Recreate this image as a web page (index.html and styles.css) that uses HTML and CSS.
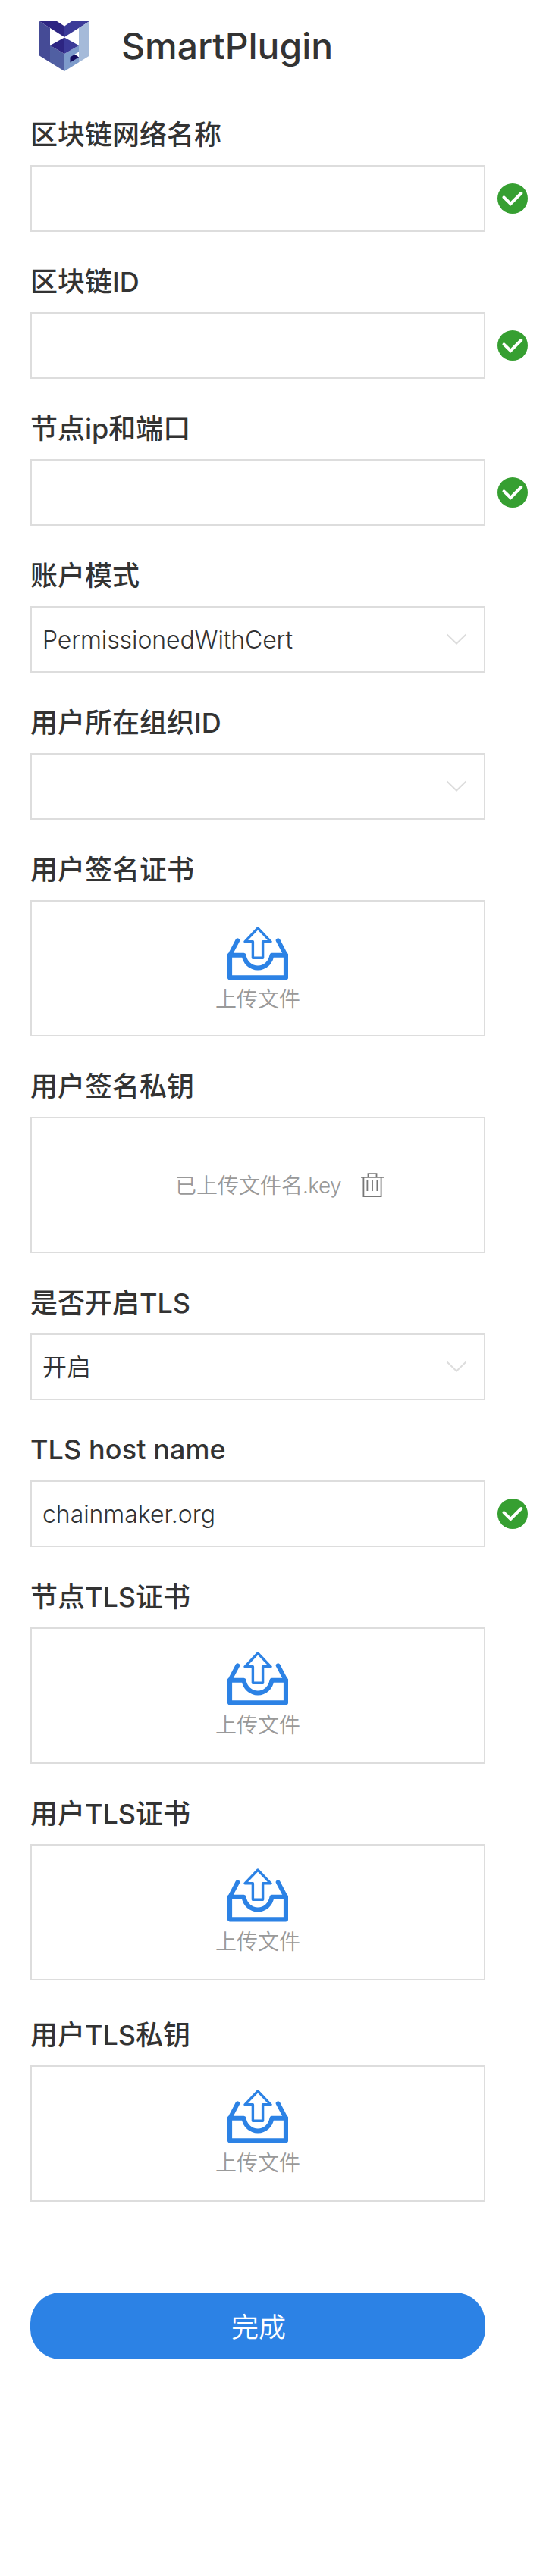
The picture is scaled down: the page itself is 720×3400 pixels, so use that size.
FILE: index.html
```html
<!DOCTYPE html>
<html lang="zh-CN">
<head>
<meta charset="utf-8">
<title>SmartPlugin</title>
<link rel="stylesheet" href="styles.css">
</head>
<body>
<svg class="sprite" aria-hidden="true">
  <symbol id="check" viewBox="0 0 40 40">
    <circle cx="20" cy="20" r="20" fill="#369f31"/>
    <path d="M8.5 18.3 17.3 27 31.3 13" fill="none" stroke="#fff" stroke-width="4" stroke-linecap="round" stroke-linejoin="miter"/>
  </symbol>
  <symbol id="chevron" viewBox="0 0 28 16">
    <path d="M1.5 1.5 14 13.5 26.5 1.5" fill="none" stroke="#ddd" stroke-width="2"/>
  </symbol>
  <symbol id="upload" viewBox="0 0 80 71">
    <g fill="none" stroke="#2c82e5" stroke-linejoin="round" stroke-linecap="round">
      <path d="M40 2 57 19.8H46.6V41.2H33.4V19.8H23Z" stroke-width="3.4"/>
      <path d="M3 37.8V67.3H77V37.8" stroke-width="6.2"/>
      <path d="M3 37.8H21.5C23 47.5 30.5 54.5 40 54.5S57 47.5 58.5 37.8H77" stroke-width="6"/>
      <path d="M13.4 18.2 3.2 37.5M66.6 18.2 76.8 37.5" stroke-width="5.8"/>
    </g>
  </symbol>
</svg>
<header class="header">
  <svg class="logo" viewBox="0 0 66 66">
    <path fill="#454b96" d="M0 0 14 9V54.2L0 45.5Z"/>
    <path fill="#2d2582" d="M0 0H23L33 6.5V21Z"/>
    <path fill="#3b3a98" d="M66 0H42.5L33 6.5V21Z"/>
    <path fill="#a5bad9" d="M66 0 52 9V54.2L66 45.5Z"/>
    <path fill="#505fa2" d="M14 32 33 43V66L14 54.2Z"/>
    <path fill="#7d9bcb" d="M52 32 33 43V66L52 54.2Z"/>
    <path fill="#2d2582" d="M33 21.5 14 32 33 43Z"/>
    <path fill="#3b3a98" d="M33 21.5 52 32 33 43Z"/>
    <path fill="#fff" d="M52 40.5 46 44 52 47.5Z"/>
    <path fill="#150d5e" d="M40.5 47.5 46.5 43.8 52 47.5 40.5 54.5Z"/>
  </svg>
  <h1 class="title">SmartPlugin</h1>
</header>
<main class="form">
  <section class="field">
    <h2 class="label">区块链网络名称</h2>
    <div class="row"><div class="box"></div><svg class="check"><use href="#check"/></svg></div>
  </section>
  <section class="field">
    <h2 class="label">区块链ID</h2>
    <div class="row"><div class="box"></div><svg class="check"><use href="#check"/></svg></div>
  </section>
  <section class="field">
    <h2 class="label">节点ip和端口</h2>
    <div class="row"><div class="box"></div><svg class="check"><use href="#check"/></svg></div>
  </section>
  <section class="field">
    <h2 class="label">账户模式</h2>
    <div class="row"><div class="box"><span class="value mode">PermissionedWithCert</span><svg class="chevron"><use href="#chevron"/></svg></div></div>
  </section>
  <section class="field">
    <h2 class="label">用户所在组织ID</h2>
    <div class="row"><div class="box"><span class="value"></span><svg class="chevron"><use href="#chevron"/></svg></div></div>
  </section>
  <section class="field">
    <h2 class="label">用户签名证书</h2>
    <div class="drop drop-first"><svg class="upload"><use href="#upload"/></svg><span class="hint">上传文件</span></div>
  </section>
  <section class="field">
    <h2 class="label">用户签名私钥</h2>
    <div class="drop drop-file">
      <span class="hint file">已上传文件名<span class="ext">.key</span></span>
      <svg class="trash" viewBox="0 0 30 33"><g fill="none" stroke="#777" stroke-width="1.8"><path d="M0 5.8H30M3.4 6V31.2H26.6V6M9.5 5.5V1.2H20.5V5.5"/><path d="M8.4 9.5V24M15 9.5V24M21.4 9.5V24"/></g></svg>
    </div>
  </section>
  <section class="field">
    <h2 class="label">是否开启TLS</h2>
    <div class="row"><div class="box"><span class="value">开启</span><svg class="chevron"><use href="#chevron"/></svg></div></div>
  </section>
  <section class="field">
    <h2 class="label latin">TLS host name</h2>
    <div class="row"><div class="box"><span class="value host">chainmaker.org</span></div><svg class="check"><use href="#check"/></svg></div>
  </section>
  <section class="field">
    <h2 class="label">节点TLS证书</h2>
    <div class="drop"><svg class="upload"><use href="#upload"/></svg><span class="hint">上传文件</span></div>
  </section>
  <section class="field field-spaced">
    <h2 class="label">用户TLS证书</h2>
    <div class="drop"><svg class="upload"><use href="#upload"/></svg><span class="hint">上传文件</span></div>
  </section>
  <section class="field">
    <h2 class="label">用户TLS私钥</h2>
    <div class="drop"><svg class="upload"><use href="#upload"/></svg><span class="hint">上传文件</span></div>
  </section>
  <button class="submit" type="button">完成</button>
</main>
</body>
</html>
```
FILE: styles.css
```css
* { box-sizing: border-box; }
body {
  margin: 0;
  min-height: 3400px;
  background: #fff;
  color: #333;
  font-family: Inter, "Noto Sans CJK SC", sans-serif;
}
svg { display: block; flex: none; }
.sprite { width: 0; height: 0; position: absolute; }
.header {
  display: flex;
  align-items: center;
  gap: 42px;
  height: 122px;
  padding-left: 52px;
}
.logo { width: 66px; height: 66px; }
.title { margin: 0; font-size: 48px; font-weight: 500; line-height: 66px; }
.form { padding: 30px 0 0 40px; }
.field { margin-bottom: 40px; }
.field-spaced { margin-bottom: 46px; }
.label {
  margin: 0 0 15px;
  padding-top: 1px;
  font-size: 36px;
  font-weight: 500;
  line-height: 50px;
  white-space: nowrap;
}
.latin { margin-bottom: 16px; padding-top: 0; letter-spacing: 0.1px; }
.row { display: flex; align-items: center; gap: 16px; }
.box {
  display: flex;
  align-items: center;
  justify-content: space-between;
  width: 600px;
  height: 88px;
  padding: 0 22px 0 14px;
  border: 2px solid #ddd;
}
.value { padding-top: 2px; font-size: 32px; font-weight: 350; line-height: 44px; }
.mode { letter-spacing: -0.1px; }
.host { letter-spacing: -0.05px; }
.check { width: 40px; height: 40px; }
.chevron { width: 28px; height: 16px; }
.drop {
  display: flex;
  flex-direction: column;
  align-items: center;
  width: 600px;
  height: 180px;
  padding-top: 30px;
  border: 2px solid #ddd;
}
.drop-first { padding-top: 33px; }
.drop-file { flex-direction: row; padding: 0 0 0 189px; }
.upload { width: 80px; height: 71px; }
.hint {
  margin-top: 6px;
  color: #999;
  font-size: 28px;
  font-weight: 350;
  line-height: 40px;
  white-space: nowrap;
}
.drop-first .hint { margin-top: 5px; }
.file { margin: 1px 26px 0 0; }
.ext { letter-spacing: -0.6px; }
.trash { width: 30px; height: 33px; }
.submit {
  display: block;
  width: 600px;
  height: 88px;
  margin-top: 120px;
  padding: 3px 0 0 2px;
  border: 0;
  border-radius: 40px;
  background: #2c82e5;
  color: #fff;
  font: 350 36px/50px Inter, "Noto Sans CJK SC", sans-serif;
}
```
